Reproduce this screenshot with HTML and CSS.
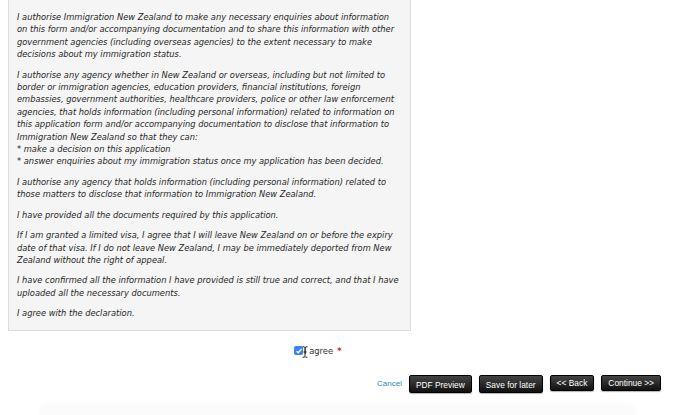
FILE: index.html
```html
<!DOCTYPE html>
<html>
<head>
<meta charset="utf-8">
<link rel="stylesheet" href="styles.css">
</head>
<body>
<div class="page">
  <div class="decl">
    <p>I authorise Immigration New Zealand to make any necessary enquiries about information on this form and/or accompanying documentation and to share this information with other government agencies (including overseas agencies) to the extent necessary to make decisions about my immigration status.</p>
    <p>I authorise any agency whether in New Zealand or overseas, including but not limited to border or immigration agencies, education providers, financial institutions, foreign embassies, government authorities, healthcare providers, police or other law enforcement agencies, that holds information (including personal information) related to information on this application form and/or accompanying documentation to disclose that information to Immigration New Zealand so that they can:<br>* make a decision on this application<br>* answer enquiries about my immigration status once my application has been decided.</p>
    <p>I authorise any agency that holds information (including personal information) related to those matters to disclose that information to Immigration New Zealand.</p>
    <p>I have provided all the documents required by this application.</p>
    <p>If I am granted a limited visa, I agree that I will leave New Zealand on or before the expiry date of that visa. If I do not leave New Zealand, I may be immediately deported from New Zealand without the right of appeal.</p>
    <p>I have confirmed all the information I have provided is still true and correct, and that I have uploaded all the necessary documents.</p>
    <p>I agree with the declaration.</p>
  </div>
  <div class="agree-row">
    <label class="agree"><span class="cb"><svg width="8" height="8" viewBox="0 0 8 8"><path d="M1.5 4.2 L3.2 5.8 L6.5 2" fill="none" stroke="#fff" stroke-width="1.3"/></svg></span><span class="lbl">I agree</span><span class="req">*</span><svg class="ibeam" width="6" height="12" viewBox="0 0 6 12"><path d="M0.5 0.8 H2.3 L3 1.5 L3.7 0.8 H5.5 M3 1.5 V10.5 M0.5 11.2 H2.3 L3 10.5 L3.7 11.2 H5.5 M1.5 6 H4.5" fill="none" stroke="#111" stroke-width="0.9"/></svg></label>
  </div>
  <div class="actions">
    <a class="cancel" href="#">Cancel</a>
    <button class="btn tall">PDF Preview</button>
    <button class="btn tall">Save for later</button>
    <button class="btn">&lt;&lt; Back</button>
    <button class="btn">Continue &gt;&gt;</button>
  </div>
  <div class="footer-shadow"></div>
</div>
</body>
</html>
```
FILE: styles.css
```css
html, body {
  margin: 0;
  padding: 0;
  background: #fff;
}
.page {
  width: 675px;
  height: 415px;
  overflow: hidden;
  position: relative;
}
.decl {
  margin: -10px 0 0 8px;
  width: 382px;
  padding: 20px 11px 10px 8px;
  background: #f5f5f5;
  border: 1px solid #dcdcdc;
  font-family: "DejaVu Sans", Verdana, sans-serif;
  font-style: italic;
  font-size: 8.3px;
  line-height: 12.4px;
  color: #262626;
}
.decl p {
  margin: 0 0 8px 0;
}
.decl p:last-child {
  margin-bottom: 0;
}
.agree-row {
  display: flex;
  justify-content: flex-start;
  padding: 15px 0 0 294px;
}
.agree {
  position: relative;
  display: flex;
  align-items: center;
  font-family: "DejaVu Sans", Verdana, sans-serif;
  font-size: 8.4px;
  color: #333;
}
.cb {
  width: 9px;
  height: 9px;
  border-radius: 2px;
  background: #3b82f6;
  display: inline-flex;
  align-items: center;
  justify-content: center;
  margin-right: 1px;
}
.ibeam {
  position: absolute;
  left: 8px;
  top: 0px;
}
.req {
  color: #e02020;
  margin-left: 4px;
  font-weight: bold;
}
.actions {
  display: flex;
  align-items: flex-start;
  gap: 7px;
  padding: 19px 0 0 377px;
}
.cancel {
  font-family: "Liberation Sans", Arial, sans-serif;
  font-size: 8px;
  color: #2e86b8;
  text-decoration: none;
  margin-top: 4px;
  white-space: nowrap;
}
.btn {
  font-family: "Liberation Sans", Arial, sans-serif;
  font-size: 8.4px;
  color: #fff;
  white-space: nowrap;
  background: linear-gradient(#444, #111);
  border: 1px solid #000;
  border-radius: 2px;
  height: 16px;
  padding: 0 6px;
  box-shadow: 0 1px 1px rgba(0,0,0,0.3);
}
.btn.tall {
  height: 18px;
  padding: 2px 6px 0;
}
.footer-shadow {
  position: absolute;
  left: 40px;
  right: 40px;
  top: 405px;
  height: 10px;
  background: #fbfbfb;
  border-radius: 8px 8px 0 0;
  box-shadow: 0 0 8px rgba(0,0,0,0.03);
}
```
